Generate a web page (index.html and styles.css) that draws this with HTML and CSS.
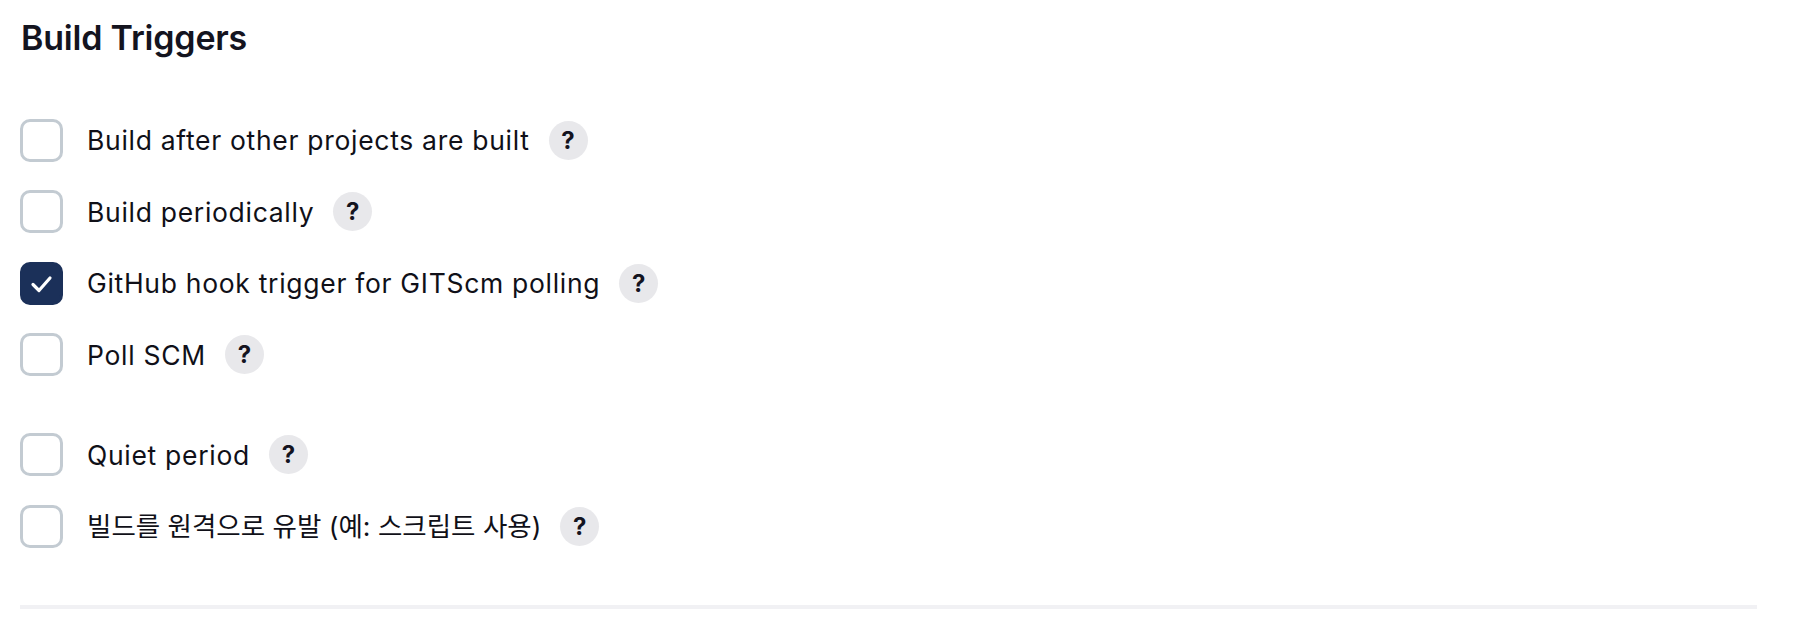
FILE: index.html
```html
<!DOCTYPE html>
<html lang="ko">
<head>
<meta charset="utf-8">
<title>Build Triggers</title>
<link rel="stylesheet" href="styles.css">
</head>
<body>
<section class="section">
  <h2 class="section-title">Build Triggers</h2>
  <div class="items">
    <div class="row">
      <span class="box"></span>
      <span class="label">Build after other projects are built</span>
      <span class="help">?</span>
    </div>
    <div class="row">
      <span class="box"></span>
      <span class="label">Build periodically</span>
      <span class="help">?</span>
    </div>
    <div class="row">
      <span class="box checked"><svg viewBox="0 0 43 43" width="43" height="43"><path d="M13 22.5 L19 28.5 L30 16" fill="none" stroke="#fff" stroke-width="3.2" stroke-linecap="round" stroke-linejoin="round"/></svg></span>
      <span class="label">GitHub hook trigger for GITScm polling</span>
      <span class="help">?</span>
    </div>
    <div class="row">
      <span class="box"></span>
      <span class="label">Poll SCM</span>
      <span class="help">?</span>
    </div>
    <div class="row spaced">
      <span class="box"></span>
      <span class="label">Quiet period</span>
      <span class="help">?</span>
    </div>
    <div class="row">
      <span class="box"></span>
      <span class="label label-ko">빌드를 원격으로 유발 (예: 스크립트 사용)</span>
      <span class="help">?</span>
    </div>
  </div>
  <hr class="divider">
</section>
</body>
</html>
```
FILE: styles.css
```css
html, body {
  margin: 0;
  padding: 0;
  background: #ffffff;
}

body {
  font-family: Inter, "Noto Sans CJK KR", "Noto Sans", sans-serif;
  color: #14141f;
}

.section {
  padding: 18px 43px 0 20px;
}

.section-title {
  margin: 0;
  font-size: 34px;
  line-height: 40px;
  font-weight: 600;
  letter-spacing: -0.2px;
  padding-left: 1px;
}

.items {
  display: flex;
  flex-direction: column;
  gap: 28.5px;
  margin-top: 60.5px;
}

.row {
  display: flex;
  align-items: center;
  height: 43px;
}

.row.spaced {
  margin-top: 28.5px;
}

.box {
  box-sizing: border-box;
  width: 43px;
  height: 43px;
  border: 3px solid #c3cbd2;
  border-radius: 10px;
  flex: none;
  display: flex;
  align-items: center;
  justify-content: center;
}

.box.checked {
  background: #1b3059;
  border-color: #1b3059;
}

.box.checked svg {
  display: block;
  flex: none;
}

.label {
  margin-left: 24px;
  font-size: 26.5px;
  line-height: 32px;
  font-weight: 400;
  letter-spacing: 0.7px;
  color: #101018;
}

.label-ko {
  letter-spacing: 0;
}

.help {
  margin-left: 19px;
  width: 39px;
  height: 39px;
  border-radius: 50%;
  background: #e8e8eb;
  display: flex;
  align-items: center;
  justify-content: center;
  font-size: 24px;
  font-weight: 700;
  color: #14141f;
  flex: none;
}

.divider {
  margin: 57px 0 0 0;
  border: none;
  height: 4px;
  background: #f1f1f4;
}
```
